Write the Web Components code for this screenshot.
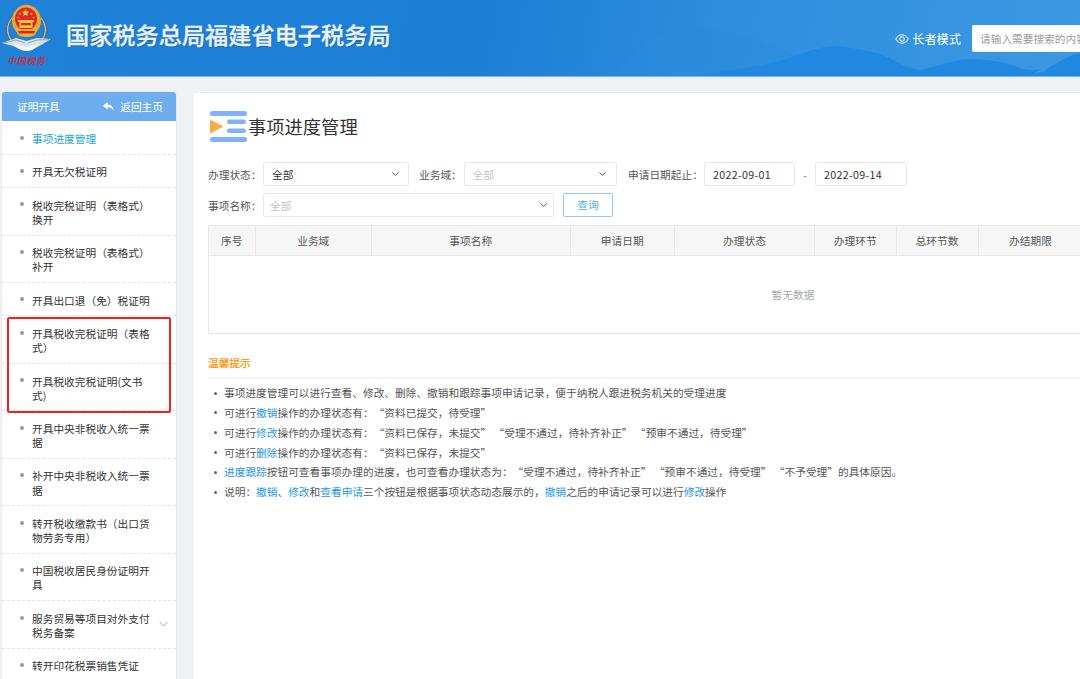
<!DOCTYPE html>
<html lang="zh-CN">
<head>
<meta charset="utf-8">
<style>
html,body{margin:0;padding:0;width:1080px;height:679px;overflow:hidden;background:#eff1f4;font-family:"Noto Sans CJK SC","Liberation Sans",sans-serif;text-spacing-trim:space-all;font-feature-settings:"chws" 0;}
</style>
</head>
<body>
<tax-app></tax-app>

<template id="t-app">
<style>
:host{display:block;width:1080px;height:679px;overflow:hidden;}
.body{display:flex;align-items:flex-start;gap:17px;padding:15px 0 0 2px;height:587px;overflow:hidden;}
</style>
<tax-header></tax-header>
<div class="body">
  <tax-sidebar>
    <side-item active>事项进度管理</side-item>
    <side-item>开具无欠税证明</side-item>
    <side-item>税收完税证明&#xFF08;表格式&#xFF09;换开</side-item>
    <side-item>税收完税证明&#xFF08;表格式&#xFF09;补开</side-item>
    <side-item>开具出口退&#xFF08;免&#xFF09;税证明</side-item>
    <side-item>开具税收完税证明&#xFF08;表格式&#xFF09;</side-item>
    <side-item>开具税收完税证明(文书式)</side-item>
    <side-item>开具中央非税收入统一票据</side-item>
    <side-item>补开中央非税收入统一票据</side-item>
    <side-item>转开税收缴款书&#xFF08;出口货物劳务专用&#xFF09;</side-item>
    <side-item>中国税收居民身份证明开具</side-item>
    <side-item expand>服务贸易等项目对外支付税务备案</side-item>
    <side-item>转开印花税票销售凭证</side-item>
  </tax-sidebar>
  <tax-main></tax-main>
</div>
</template>

<template id="t-header">
<style>
:host{display:block;height:76px;position:relative;overflow:hidden;border-bottom:1px solid #7db8ea;
 background:linear-gradient(100deg,#1f82d8 0,#1c7fd6 45%,#2f8fdf 68%,#3b98e2 100%);}
.row{position:relative;display:flex;align-items:center;height:76px;}
.scene{position:absolute;left:0;top:0;width:1080px;height:76px;}
.logo{position:relative;flex:none;width:52px;height:72px;align-self:flex-start;}
.logo svg{position:absolute;left:0;top:0;width:52px;height:56px;}
.sig{position:absolute;left:7.5px;top:53.5px;font:italic 500 9px/14px "Noto Sans CJK SC",sans-serif;color:#d8262c;letter-spacing:.6px;white-space:nowrap;}
h1{margin:0 0 0 14px;font:500 23.2px/32px "Noto Sans CJK SC",sans-serif;color:#e9f2fa;-webkit-text-stroke:.35px #e9f2fa;white-space:nowrap;position:relative;top:-4px;text-shadow:1px 1px 1px rgba(10,70,130,.45);}
.mode{margin-left:auto;display:flex;align-items:center;gap:3px;color:#fff;font-size:12.2px;line-height:16px;position:relative;top:1px;white-space:nowrap;}
.mode svg{width:14px;height:10px;}
.search{flex:none;width:108px;margin-left:11px;height:27px;background:#fff;border-radius:2px 0 0 2px;box-sizing:border-box;padding-left:8px;font-size:10.7px;line-height:27px;color:#9b9b9b;white-space:nowrap;overflow:hidden;}
</style>
<svg class="scene" viewBox="0 0 1080 76" aria-hidden="true">
  <path d="M610 76 C640 40 660 30 700 28 C760 34 810 60 830 76Z" fill="#2b8cde" opacity=".45"/>
  <path d="M695 76 C730 70 765 66 790 58 C805 52 820 47 833 46 C850 47 865 50 880 54 C895 60 905 68 920 70 C940 66 955 59 973 59 C990 60 1005 62 1020 68 C1032 72 1045 70 1055 64 C1065 58 1072 55 1080 53 L1080 76Z" fill="#2088e0"/>
  <path d="M1034 73 L1052 64 L1044 72Z" fill="#4a9fe4" opacity=".7"/>
</svg>
<div class="row">
  <div class="logo">
    <svg viewBox="0 0 52 56" aria-hidden="true">
      <path d="M14 16 C5 24 5 36 15 43" fill="none" stroke="#5b6a72" stroke-width="4.4" stroke-dasharray="2.4 1"/>
      <path d="M39 16 C48 24 48 36 38 43" fill="none" stroke="#5b6a72" stroke-width="4.4" stroke-dasharray="2.4 1"/>
      <path d="M12 18 C6 25 6 35 13 42" fill="none" stroke="#cfd7dc" stroke-width="1"/>
      <path d="M41 18 C47 25 47 35 40 42" fill="none" stroke="#cfd7dc" stroke-width="1"/>
      <path d="M2 43 L16 38 L26.5 41 L37 38 L51 39 L41 45 L32 50 L27 51 L21 50 L13 46Z" fill="#dbe2e8"/>
      <path d="M14 44 L26.5 47 L39 44 L32 50 L27 51 L21 50Z" fill="#f5f8fa"/>
      <path d="M4 43 L16 40 L25 43 M49 39.6 L37 40 L28 43" fill="none" stroke="#76848f" stroke-width=".7"/>
      <ellipse cx="26.5" cy="20.5" rx="14.5" ry="15.7" fill="#dcae34"/>
      <ellipse cx="26" cy="19" rx="11" ry="11.5" fill="#e2272c"/>
      <path d="M25.5 9 L26.6 11.6 L29.2 11.8 L27.2 13.5 L27.8 16 L25.5 14.7 L23.2 16 L23.8 13.5 L21.8 11.8 L24.4 11.6Z" fill="#f7d13c"/>
      <circle cx="20" cy="14" r="1" fill="#f7d13c"/><circle cx="31.5" cy="14" r="1" fill="#f7d13c"/><circle cx="18" cy="17.5" r=".8" fill="#f7d13c"/><circle cx="33.5" cy="17.5" r=".8" fill="#f7d13c"/>
      <path d="M18 20 L34 20 L34 22 L32.5 22 L32.5 28 L19.5 28 L19.5 22 L18 22Z" fill="#f0c437"/>
      <rect x="21" y="23" width="10" height="2.2" fill="#e2272c"/>
      <path d="M15.5 29 H37.5 L35 35 C31 37.5 22 37.5 18 35Z" fill="#e8b52e"/>
      <path d="M18 31 H35 L34 33.5 H19Z" fill="#d8262c"/>
    </svg>
    <span class="sig">中国税务</span>
  </div>
  <h1>国家税务总局福建省电子税务局</h1>
  <div class="mode">
    <svg viewBox="0 0 14 10" aria-hidden="true"><path d="M.7 5 C2.5 2 4.6.8 7 .8 S11.5 2 13.3 5 C11.5 8 9.4 9.2 7 9.2 S2.5 8 .7 5Z" fill="none" stroke="#fff" stroke-width="1"/><circle cx="7" cy="5" r="2.3" fill="none" stroke="#fff" stroke-width="1"/></svg>
    <span>长者模式</span>
  </div>
  <div class="search">请输入需要搜索的内容</div>
</div>
</template>

<template id="t-sidebar">
<style>
:host{display:block;flex:none;width:174px;background:#fff;border-radius:3px 3px 0 0;position:relative;box-shadow:0 0 0 1px #e8ebf0;font-size:10.7px;}
.head{height:29.4px;background:#6eaeee;border-radius:3px 3px 0 0;color:#fff;display:flex;align-items:center;justify-content:space-between;padding:0 13px 0 15px;font-size:10.7px;}
.back{display:flex;align-items:center;gap:6px;}
.back svg{width:11px;height:9px;}
.mark{position:absolute;left:5px;top:224.5px;width:164px;height:96px;border:2px solid #f3211c;border-radius:2px;pointer-events:none;box-sizing:border-box;}
</style>
<div class="head"><span>证明开具</span><span class="back"><svg viewBox="0 0 11 9" aria-hidden="true"><path d="M4.6 0 L0 3.8 L4.6 7.4 V5.2 C7 5.1 9 5.8 10.8 8.6 C10.4 5 8.4 2.6 4.6 2.4Z" fill="#fff"/></svg>返回主页</span></div>
<slot></slot>
<div class="mark"></div>
</template>

<template id="t-item">
<style>
:host{display:block;position:relative;padding:10.6px 22px 7.7px 30px;line-height:14.1px;font-size:10.7px;color:#333;border-bottom:1px dashed #e3e3e3;}
:host([active]){color:#1ba6cf;}
.dot{position:absolute;left:17.5px;top:14.3px;width:4px;height:4px;border-radius:50%;background:#9a9a9a;}
.chev{display:none;position:absolute;right:8px;top:20px;width:9px;height:6px;}
:host([expand]) .chev{display:block;}
</style>
<span class="dot"></span><slot></slot>
<svg class="chev" viewBox="0 0 9 6" aria-hidden="true"><path d="M.5 .8 L4.5 5 L8.5 .8" fill="none" stroke="#a0a0a0" stroke-width=".9"/></svg>
</template>

<template id="t-main">
<style>
:host{display:block;flex:none;width:887px;height:586px;margin-top:1px;background:#fff;box-shadow:0 0 0 1px #e8ebf0;padding:0 0 0 15px;box-sizing:border-box;font-size:10.7px;color:#555;overflow:hidden;}
.title{display:flex;align-items:center;gap:1px;height:42px;margin:12px 0 0 1px;}
.title svg{width:38px;height:31px;flex:none;}
.title span{font-size:18.3px;line-height:28px;color:#333;}
.filters{display:flex;flex-direction:column;gap:7px;margin-top:15px;white-space:nowrap;}
.frow{display:flex;align-items:center;height:24px;}
.lbl{flex:none;color:#555;}
.dash{flex:none;width:20px;text-align:center;color:#777;}
.w55{width:55px}.w44{width:44.5px;margin-left:10px}.w76{width:76px;margin-left:11.5px}
.s146{width:146px}.s153{width:153px}.d91{width:91px;letter-spacing:.3px}.d92{width:92px;letter-spacing:.3px}.s290{width:290.5px}
.btn{margin-left:9.5px;}
.tips{margin-top:22px;}
.tips h3{margin:0;font:500 10.7px/14px "Noto Sans CJK SC",sans-serif;color:#ff9a1f;-webkit-text-stroke:.2px #ff9a1f;padding-bottom:7px;border-bottom:1px solid #ececec;width:880px;}
ul{list-style:none;margin:5px 0 0;padding:0;}
li{position:relative;line-height:19.85px;padding-left:16px;white-space:nowrap;color:#555;}
li::before{content:"";position:absolute;left:5.5px;top:8.5px;width:3px;height:3px;border-radius:50%;background:#666;}
b{font-weight:400;color:#1e97e4;}
</style>
<div class="title">
  <svg viewBox="0 0 38 31" aria-hidden="true">
    <rect x="1" y="0" width="37" height="5" rx="2.5" fill="#80b1ff"/>
    <path d="M1 8.5 L14.5 15.5 L1 22.5Z" fill="#ffab40"/>
    <rect x="18" y="8.5" width="19" height="4.5" rx="2.2" fill="#80b1ff"/>
    <rect x="18" y="17.5" width="19" height="4.5" rx="2.2" fill="#80b1ff"/>
    <rect x="1" y="26" width="37" height="5" rx="2.5" fill="#80b1ff"/>
  </svg>
  <span>事项进度管理</span>
</div>
<div class="filters">
  <div class="frow">
    <span class="lbl w55">办理状态&#xFF1A;</span>
    <form-box class="s146" value>全部<svg slot="end" width="7" height="4" viewBox="0 0 7 4"><path d="M.5 .4 L3.5 3.4 L6.5 .4" fill="none" stroke="#555" stroke-width="1"/></svg></form-box>
    <span class="lbl w44">业务域&#xFF1A;</span>
    <form-box class="s153">全部<svg slot="end" width="7" height="4" viewBox="0 0 7 4"><path d="M.5 .4 L3.5 3.4 L6.5 .4" fill="none" stroke="#555" stroke-width="1"/></svg></form-box>
    <span class="lbl w76">申请日期起止&#xFF1A;</span>
    <form-box class="d91" value>2022-09-01</form-box>
    <span class="dash">-</span>
    <form-box class="d92" value>2022-09-14</form-box>
  </div>
  <div class="frow">
    <span class="lbl w55">事项名称&#xFF1A;</span>
    <form-box class="s290" tight>全部<svg slot="end" width="7" height="4" viewBox="0 0 7 4"><path d="M.5 .4 L3.5 3.4 L6.5 .4" fill="none" stroke="#555" stroke-width="1"/></svg></form-box>
    <query-btn class="btn">查询</query-btn>
  </div>
</div>
<data-table></data-table>
<div class="tips">
  <h3>温馨提示</h3>
  <ul>
    <li>事项进度管理可以进行查看、修改、删除、撤销和跟踪事项申请记录&#xFF0C;便于纳税人跟进税务机关的受理进度</li>
    <li>可进行<b>撤销</b>操作的办理状态有&#xFF1A;&#x201C;资料已提交&#xFF0C;待受理&#x201D;</li>
    <li>可进行<b>修改</b>操作的办理状态有&#xFF1A;&#x201C;资料已保存&#xFF0C;未提交&#x201D; &#x201C;受理不通过&#xFF0C;待补齐补正&#x201D; &#x201C;预审不通过&#xFF0C;待受理&#x201D;</li>
    <li>可进行<b>删除</b>操作的办理状态有&#xFF1A;&#x201C;资料已保存&#xFF0C;未提交&#x201D;</li>
    <li><b>进度跟踪</b>按钮可查看事项办理的进度&#xFF0C;也可查看办理状态为&#xFF1A;&#x201C;受理不通过&#xFF0C;待补齐补正&#x201D; &#x201C;预审不通过&#xFF0C;待受理&#x201D; &#x201C;不予受理&#x201D;的具体原因。</li>
    <li>说明&#xFF1A;<b>撤销</b>、<b>修改</b>和<b>查看申请</b>三个按钮是根据事项状态动态展示的&#xFF0C;<b>撤销</b>之后的申请记录可以进行<b>修改</b>操作</li>
  </ul>
</div>
</template>

<template id="t-box">
<style>
:host{display:flex;flex:none;align-items:center;justify-content:space-between;height:24px;box-sizing:border-box;border:1px solid #e8e8e8;border-radius:2px;background:#fff;padding:0 9.5px 0 8px;font-size:10.7px;color:#c4c4c4;}
:host([value]){color:#333;}
:host([tight]){padding:0 5.5px 0 6px;}
::slotted(svg){flex:none;}
</style>
<span><slot></slot></span><slot name="end"></slot>
</template>

<template id="t-btn">
<style>
:host{display:block;flex:none;width:50px;height:24px;box-sizing:border-box;border:1px solid #8ccaf7;border-radius:2px;color:#53aef0;text-align:center;line-height:22px;font-size:10.7px;}
</style>
<slot></slot>
</template>

<template id="t-table">
<style>
:host{display:block;width:1170px;margin-top:8px;border:1px solid #e8e8e8;box-sizing:border-box;height:109px;font-size:10.7px;color:#555;}
.h{display:grid;grid-template-columns:46.5px 116.5px 198.5px 104.5px 140px 81.5px 82px 105px 1fr;height:28.5px;background:#f6f6f6;border-bottom:1px solid #e8e8e8;}
.h span{display:flex;align-items:center;justify-content:center;border-right:1px solid #e8e8e8;}
.e{height:77px;display:flex;align-items:center;justify-content:center;color:#a8a8a8;}
</style>
<div class="h"><span>序号</span><span>业务域</span><span>事项名称</span><span>申请日期</span><span>办理状态</span><span>办理环节</span><span>总环节数</span><span>办结期限</span><span></span></div>
<div class="e"><span>暂无数据</span></div>
</template>

<script>
const def=(tag,tpl)=>customElements.define(tag,class extends HTMLElement{
  constructor(){super();this.attachShadow({mode:'open'}).appendChild(document.getElementById(tpl).content.cloneNode(true));}
});
def('tax-header','t-header');
def('side-item','t-item');
def('tax-sidebar','t-sidebar');
def('form-box','t-box');
def('query-btn','t-btn');
def('data-table','t-table');
def('tax-main','t-main');
def('tax-app','t-app');
</script>
</body>
</html>
